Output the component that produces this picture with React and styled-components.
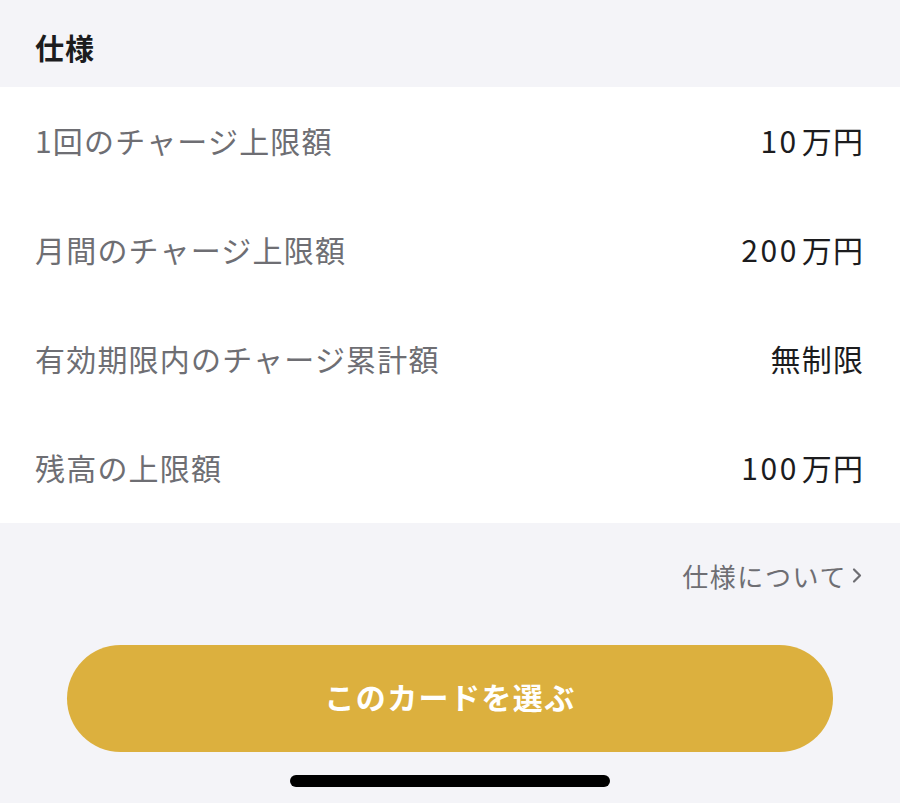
import React from "react";
import styled, { createGlobalStyle } from "styled-components";

const GlobalStyle = createGlobalStyle`
  html, body {
    margin: 0;
    padding: 0;
    background: #f4f4f8;
    font-family: "Noto Sans CJK JP", "Noto Sans", sans-serif;
  }
`;

const Page = styled.div`
  width: 900px;
  height: 803px;
  display: flex;
  flex-direction: column;
  background: #f4f4f8;
  overflow: hidden;
`;

const SectionHeader = styled.div`
  height: 87px;
  box-sizing: border-box;
  padding: 6px 35px 0;
  display: flex;
  align-items: center;
  font-size: 29px;
  font-weight: 700;
  letter-spacing: 1px;
  color: #1c1c1e;
`;

const List = styled.div`
  background: #ffffff;
  display: flex;
  flex-direction: column;
`;

const Row = styled.div`
  height: 109px;
  box-sizing: border-box;
  padding: 0 37px 3px 35px;
  display: flex;
  align-items: center;
  justify-content: space-between;
  font-size: 30px;
  letter-spacing: 1.2px;
`;

const Label = styled.span`
  color: #6e6e73;
`;

const Value = styled.span`
  color: #1c1c1e;
  margin-right: -1.2px;
`;

const Digits = styled.span`
  letter-spacing: 2.5px;
  margin-right: 3px;
`;

const LinkRow = styled.div`
  height: 108px;
  box-sizing: border-box;
  padding: 0 38px 5px;
  display: flex;
  align-items: center;
  justify-content: flex-end;
  margin-top: 1px;
`;

const Link = styled.a`
  font-size: 26px;
  letter-spacing: 1.6px;
  color: #6e6e73;
  text-decoration: none;
  display: flex;
  align-items: center;
  gap: 5px;
`;

const ButtonWrap = styled.div`
  display: flex;
  justify-content: center;
  margin-top: 13px;
`;

const Button = styled.button`
  width: 766px;
  height: 107px;
  border: none;
  border-radius: 54px;
  background: #dcb03e;
  color: #ffffff;
  font-family: inherit;
  font-size: 30px;
  font-weight: 700;
  letter-spacing: 1.4px;
  padding: 0 0 5px;
`;

const HomeIndicator = styled.div`
  width: 320px;
  height: 12px;
  border-radius: 6px;
  background: #000000;
  margin: 23px auto 0;
`;

const specs = [
  { label: "1回のチャージ上限額", num: "10", unit: "万円" },
  { label: "月間のチャージ上限額", num: "200", unit: "万円" },
  { label: "有効期限内のチャージ累計額", num: "", unit: "無制限" },
  { label: "残高の上限額", num: "100", unit: "万円" },
];

const Chevron = () => (
  <svg width="10" height="17" viewBox="0 0 10 17" fill="none">
    <path d="M2 2.5l6 6-6 6" stroke="#6e6e73" strokeWidth="2.2" strokeLinecap="round" strokeLinejoin="round" />
  </svg>
);

const App = () => {
  return (
    <Page>
      <GlobalStyle />
      <SectionHeader>仕様</SectionHeader>
      <List>
        {specs.map((s) => (
          <Row key={s.label}>
            <Label>{s.label}</Label>
            <Value>
              {s.num && <Digits>{s.num}</Digits>}
              {s.unit}
            </Value>
          </Row>
        ))}
      </List>
      <LinkRow>
        <Link href="#">
          仕様について
          <Chevron />
        </Link>
      </LinkRow>
      <ButtonWrap>
        <Button>このカードを選ぶ</Button>
      </ButtonWrap>
      <HomeIndicator />
    </Page>
  );
};

export default App;
